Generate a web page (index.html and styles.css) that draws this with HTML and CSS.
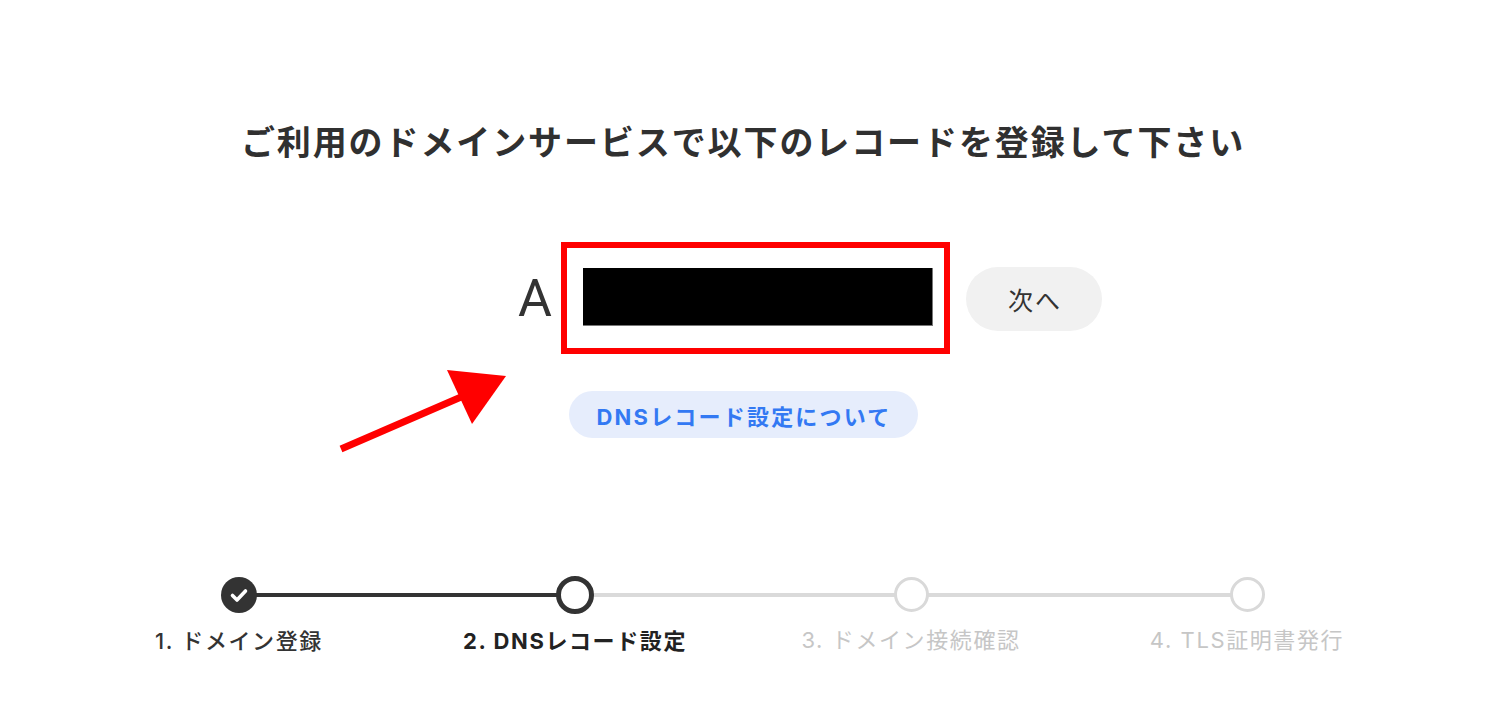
FILE: index.html
```html
<!DOCTYPE html>
<html lang="ja">
<head>
<meta charset="utf-8">
<title>DNSレコード設定</title>
<link rel="stylesheet" href="styles.css">
</head>
<body>
<main class="page">
  <h1 class="title">ご利用のドメインサービスで以下のレコードを登録して下さい</h1>

  <div class="record-row">
    <span class="record-type">A</span>
    <div class="record-frame">
      <div class="record-value"></div>
    </div>
    <button class="next-btn">次へ</button>
  </div>

  <a class="help-pill" href="#">DNSレコード設定について</a>

  <ol class="stepper">
    <li class="step done">
      <span class="line"></span>
      <span class="dot">
        <svg width="36" height="36" viewBox="0 0 36 36"><path d="M11.5 18.5 L16 23 L24.5 14" fill="none" stroke="#fff" stroke-width="3.6" stroke-linecap="round" stroke-linejoin="round"/></svg>
      </span>
      <span class="label">1. ドメイン登録</span>
    </li>
    <li class="step current">
      <span class="line"></span>
      <span class="dot"></span>
      <span class="label">2. DNSレコード設定</span>
    </li>
    <li class="step todo">
      <span class="line"></span>
      <span class="dot"></span>
      <span class="label">3. ドメイン接続確認</span>
    </li>
    <li class="step todo">
      <span class="dot"></span>
      <span class="label">4. TLS証明書発行</span>
    </li>
  </ol>

  <svg class="annotation" width="1493" height="702" viewBox="0 0 1493 702">
    <line x1="341" y1="449" x2="468" y2="394" stroke="#ff0000" stroke-width="7"/>
    <polygon points="447,370 506,376 472,424" fill="#ff0000"/>
  </svg>
</main>
</body>
</html>
```

FILE: styles.css
```css
* { box-sizing: border-box; }

html, body {
  margin: 0;
  padding: 0;
  background: #ffffff;
}

body {
  font-family: "Inter", "Noto Sans CJK JP", sans-serif;
  color: #333333;
}

.page {
  position: relative;
  width: 1486px;
  height: 702px;
  display: flex;
  flex-direction: column;
  align-items: center;
  padding-top: 119px;
}

.title {
  margin: 0;
  font-size: 34px;
  line-height: 44px;
  font-weight: 700;
  letter-spacing: 1.9px;
  color: #303030;
  font-family: "Noto Sans CJK JP", sans-serif;
}

.record-row {
  margin-top: 79px;
  width: 100%;
  display: flex;
  justify-content: center;
  align-items: center;
  padding-left: 134px;
}

.record-type {
  font-family: "Roboto", sans-serif;
  font-size: 52px;
  font-weight: 400;
  line-height: 60px;
  color: #333333;
  margin-right: 9px;
  margin-top: 2px;
}

.record-frame {
  border: 6px solid #ff0000;
  padding: 20px 11px 22px 16px;
  width: 389px;
  height: 112px;
}

.record-value {
  width: 350px;
  height: 58px;
  background: #000000;
  border-right: 1px solid #777;
  border-bottom: 1px solid #777;
}

.next-btn {
  margin-left: 16px;
  margin-top: 2px;
  width: 136px;
  height: 64px;
  border: none;
  border-radius: 32px;
  background: #f1f1f1;
  color: #333333;
  font-family: "Noto Sans CJK JP", sans-serif;
  font-size: 25px;
  letter-spacing: 2px;
  padding: 0 0 0 2px;
}

.help-pill {
  margin-top: 37px;
  width: 349px;
  height: 47px;
  border-radius: 24px;
  background: #e6edfc;
  color: #3379f3;
  text-decoration: none;
  font-family: "Inter", "Noto Sans CJK JP", sans-serif;
  font-weight: 700;
  font-size: 22px;
  letter-spacing: 2.2px;
  display: flex;
  align-items: center;
  justify-content: center;
  padding-left: 2px;
}

.stepper {
  list-style: none;
  margin: 139px 0 0;
  padding: 0;
  display: grid;
  grid-template-columns: repeat(4, 336px);
}

.step {
  position: relative;
  display: flex;
  flex-direction: column;
  align-items: center;
}

.line {
  position: absolute;
  left: 50%;
  width: 100%;
  top: 16px;
  height: 4px;
  background: #dadada;
}

.done .line { background: #333333; }

.dot {
  position: relative;
  z-index: 1;
  width: 36px;
  height: 36px;
  border-radius: 50%;
  background: #ffffff;
  display: block;
}

.done .dot { background: #333333; }
.current .dot { border: 5px solid #333333; width: 38px; height: 38px; margin-top: -1px; margin-bottom: -1px; }
.todo .dot { border: 3px solid #d9d9d9; width: 35px; height: 35px; }

.dot svg { display: block; }

.label {
  margin-top: 13px;
  font-size: 22px;
  line-height: 30px;
  letter-spacing: 1.6px;
  white-space: nowrap;
  font-family: "Inter", "Noto Sans CJK JP", sans-serif;
}

.done .label { color: #333333; font-weight: 500; }
.current .label { color: #222222; font-weight: 700; }
.todo .label { color: #c6c6c6; font-weight: 400; }

.annotation {
  position: absolute;
  left: 0;
  top: 0;
  pointer-events: none;
}
```
